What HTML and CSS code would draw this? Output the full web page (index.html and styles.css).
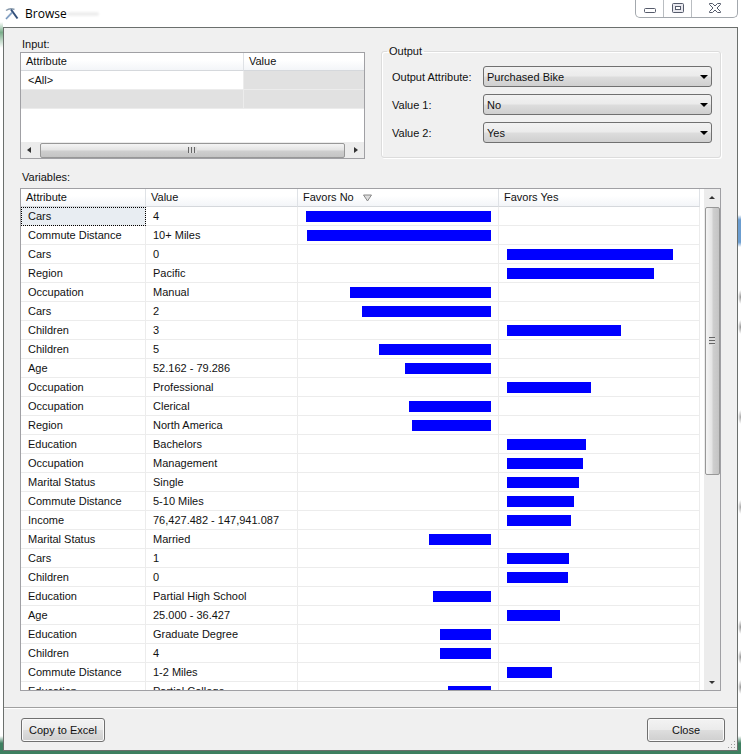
FILE: index.html
```html
<!DOCTYPE html>
<html lang="en">
<head>
<meta charset="utf-8">
<title>Browse</title>
<link rel="stylesheet" href="styles.css">
</head>
<body>
<header class="titlebar">
  <svg class="app-icon" width="14" height="14" viewBox="0 0 14 14" aria-hidden="true">
    <path d="M1 12L8 4.500" stroke="#a9bcd4" stroke-width="2"/>
    <path d="M1 3.5Q5 .5 9.5 2.5" fill="none" stroke="#8a9cae" stroke-width="1.5"/>
    <path d="M6 2.500L12.500 11.500" stroke="#34507a" stroke-width="2"/>
    <path d="M1 12L7 5.5" stroke="#6f93bd" stroke-width="1"/>
  </svg>
  <h1 class="title">Browse</h1>
  <span class="smudge"></span>
  <div class="window-buttons">
    <button class="win-btn" aria-label="Minimize"><svg width="14" height="12" viewBox="0 0 14 12"><rect x="1.5" y="6.500" width="11" height="4" rx="1" fill="#fff" stroke="#555b6b"/></svg></button>
    <button class="win-btn" aria-label="Maximize"><svg width="14" height="12" viewBox="0 0 14 12"><rect x="1.500" y="1.500" width="11" height="9" rx="1" fill="#e8e8ee" stroke="#555b6b"/><rect x="4.500" y="4.500" width="5" height="3" fill="#fff" stroke="#555b6b"/></svg></button>
    <button class="win-btn win-close" aria-label="Close window"><svg width="14" height="12" viewBox="0 0 14 12"><path d="M1.500 1.500H4.500L7 4L9.500 1.500H12.500V2.500L9 6L12.500 9.500V10.500H9.500L7 8L4.500 10.500H1.500V9.500L5 6L1.500 2.500Z" fill="#fff" stroke="#555b6b"/></svg></button>
  </div>
</header>
<main class="client">
  <div class="content">
    <div class="top">
      <section class="input-pane">
        <h2 class="label">Input:</h2>
        <div class="grid-box input-box">
          <table class="grid input-grid">
            <thead><tr><th class="w-name">Attribute</th><th>Value</th></tr></thead>
            <tbody><tr><td>&lt;All&gt;</td><td class="off"></td></tr><tr><td class="off"></td><td class="off"></td></tr></tbody>
          </table>
          <div class="hscroll"><i class="arrow left"></i><div class="thumb"><i class="grip"></i></div><i class="arrow right"></i></div>
        </div>
      </section>
      <fieldset class="output">
        <legend>Output</legend>
        <label for="attr">Output Attribute:</label>
        <div class="combo"><select id="attr"><option>Purchased Bike</option></select></div>
        <label for="v1">Value 1:</label>
        <div class="combo"><select id="v1"><option>No</option><option>Yes</option></select></div>
        <label for="v2">Value 2:</label>
        <div class="combo"><select id="v2"><option>Yes</option><option>No</option></select></div>
      </fieldset>
    </div>
    <h2 class="label vars-label">Variables:</h2>
    <div class="grid-box vars-box">
      <div class="vars-view">
        <table class="grid vars">
          <thead><tr><th class="c1">Attribute</th><th class="c2">Value</th><th class="c3">Favors No <svg class="sort" width="9" height="8" viewBox="0 0 9 8"><path d="M.5 1H8.500L4.500 7Z" fill="#ddd" stroke="#888"/></svg></th><th class="c4">Favors Yes</th></tr></thead>
          <tbody id="rows"></tbody>
        </table>
      </div>
      <div class="vscroll"><i class="arrow up"></i><div class="thumb"><i class="grip"></i></div><i class="arrow down"></i></div>
    </div>
  </div>
  <footer class="footer">
    <button class="btn">Copy to Excel</button>
    <button class="btn close">Close</button>
    <svg class="resize" width="8" height="8" viewBox="0 0 8 8" aria-hidden="true"><path d="M6 0h1v1h-1zM3 3h1v1h-1zM6 3h1v1h-1zM0 6h1v1h-1zM3 6h1v1h-1zM6 6h1v1h-1z" fill="#999"/></svg>
  </footer>
</main>
<div class="backdrop" aria-hidden="true"></div>
<script src="rows.js"></script>
</body>
</html>
```
FILE: styles.css
```css
* { box-sizing: border-box; }
body {
  margin: 0;
  height: 100vh;
  display: flex;
  flex-direction: column;
  position: relative;
  overflow: hidden;
  background: #fff;
  color: #111;
  font: 11px/16px "Liberation Sans", Arial, sans-serif;
}
button, select { font: inherit; color: inherit; }
h1, h2 { margin: 0; font-weight: normal; }
.titlebar {
  flex: none;
  display: flex;
  align-items: center;
  height: 27px;
  padding-left: 5px;
}
.app-icon { flex: none; }
.title { margin-left: 6px; font: 12px/16px "Open Sans", "Noto Sans", sans-serif; color: #000; }
.smudge { width: 32px; height: 4px; border-radius: 2px; background: #eee; filter: blur(1px); }
.window-buttons {
  align-self: flex-start;
  display: flex;
  margin: 0 3px 0 auto;
  height: 18px;
  border: 1px solid #a3a8ad;
  border-top: 0;
  border-radius: 0 0 5px 5px;
}
.win-btn {
  width: 28px;
  padding: 0 0 1px;
  border: 0;
  border-right: 1px solid #b9bdc1;
  background: none;
  display: flex;
  align-items: center;
  justify-content: center;
}
.win-close { width: 45px; border: 0; }
.client {
  flex: 1;
  min-height: 0;
  display: flex;
  flex-direction: column;
  margin: 0 3px 3px;
  border: 1px solid #6b6f6d;
  background: #f0f0f0;
}
.content {
  flex: 1;
  min-height: 0;
  display: flex;
  flex-direction: column;
  padding: 8px 16px 16px;
}
.label { font-size: 11px; line-height: 16px; padding-left: 2px; }
.top { display: grid; grid-template-columns: 345fr 340fr; gap: 16px; }
.grid-box { border: 1px solid #a0a0a4; background: #fff; }
.input-box { display: flex; flex-direction: column; height: 107px; }
.grid { width: 100%; table-layout: fixed; border-collapse: separate; border-spacing: 0; }
.grid th {
  height: 18px;
  padding: 0 5px;
  text-align: left;
  font-weight: normal;
  line-height: 17px;
  border-right: 1px solid #dfe2e6;
  border-bottom: 1px solid #d5d8dc;
  background: linear-gradient(#fff 40%, #f3f5f8);
}
.grid td {
  height: 19px;
  padding: 1px 7px 0;
  line-height: 17px;
  border-right: 1px solid #ececec;
  border-bottom: 1px solid #ececec;
  white-space: nowrap;
}
.grid td.off { background: #e1e1e1; }
.input-grid .w-name { width: 65%; }
.input-grid th:last-child, .input-grid td:last-child { border-right: 0; }
.output {
  display: grid;
  grid-template-columns: 91px 1fr;
  align-items: center;
  row-gap: 7px;
  margin: 7px 0 0;
  min-width: 0;
  padding: 7px 8px 14px 10px;
  border: 1px solid #dcdcdc;
  border-radius: 3px;
  box-shadow: inset 1px 1px #fff, 1px 1px #fff;
  align-self: start;
}
.output legend { margin-left: -5px; padding: 0 2px; }
.combo { position: relative; }
.combo select {
  display: block;
  width: 100%;
  height: 21px;
  padding: 0 3px;
  appearance: none;
  border: 1px solid #707070;
  border-radius: 3px;
  background: linear-gradient(#f2f2f2, #ebebeb 48%, #dddddd 52%, #cfcfcf);
}
.combo::after {
  content: "";
  position: absolute;
  right: 4px;
  top: 9px;
  border: 4px solid transparent;
  border-top-color: #000;
  border-bottom: 0;
  pointer-events: none;
}
.vars-label { margin: 10px 0 3px; }
.vars-box { flex: 1; min-height: 0; display: flex; }
.vars-view { flex: 1; overflow: hidden; padding-right: 4px; }
.c1 { width: 125px; }
.c2 { width: 152px; }
.sort { margin-left: 6px; vertical-align: -1px; }
.vars .focus {
  background: #e8edf2;
  outline: 1px dotted #000;
  outline-offset: -1px;
}
.vars td:last-child { padding-left: 8px; padding-right: 6px; }
.bar { display: block; height: 11px; background: #00f; }
.bar.no { margin-left: auto; }
.thumb { display: flex; align-items: center; justify-content: center; border: 1px solid #979797; border-radius: 2px; }
.arrow { flex: none; border: 3px solid transparent; }
.hscroll { display: flex; align-items: center; height: 16px; margin-top: auto; padding: 0 6px; background: #ececec; }
.hscroll .thumb { flex: 1; height: 15px; margin: 0 9px; background: linear-gradient(#f4f4f4, #e3e3e3 48%, #cfcfcf 52%, #c4c4c4); }
.hscroll .grip { width: 9px; height: 6px; background: repeating-linear-gradient(90deg, #666 0 1px, #ddd 1px 3px); }
.left { border-right: 4px solid #333; border-left: 0; }
.right { border-left: 4px solid #333; border-right: 0; }
.vscroll { display: flex; flex-direction: column; align-items: center; width: 16px; padding: 7px 0 6px; background: #ececec; }
.vscroll .thumb { width: 15px; height: 55%; margin-top: 8px; background: linear-gradient(90deg, #f4f4f4, #e3e3e3 48%, #cfcfcf 52%, #c4c4c4); }
.vscroll .grip { width: 6px; height: 8px; background: repeating-linear-gradient(#666 0 1px, #ddd 1px 3px); }
.up { border-bottom: 3px solid #333; border-top: 0; }
.down { border-top: 3px solid #333; border-bottom: 0; margin-top: auto; }
.footer {
  position: relative;
  display: flex;
  justify-content: space-between;
  padding: 10px 12px 8px 17px;
  border-top: 1px solid #a0a0a0;
  box-shadow: inset 0 1px #fff;
}
.btn {
  height: 24px;
  padding: 0 6px;
  min-width: 84px;
  border: 1px solid #707070;
  border-radius: 3px;
  background: linear-gradient(#f3f3f3, #ebebeb 48%, #dddddd 52%, #cfcfcf);
  box-shadow: inset 0 0 0 1px #fafafa;
}
.btn.close { min-width: 78px; }
.resize { position: absolute; right: 1px; bottom: 1px; }
.backdrop {
  position: absolute;
  inset: 0;
  z-index: -1;
  background:
    linear-gradient(transparent, #6b9dd0 15% 85%, transparent) right top 215px / 3px 32px no-repeat,
    radial-gradient(#999, transparent 70%) right -2px top 290px / 5px 14px no-repeat,
    radial-gradient(#999, transparent 70%) right -2px top 320px / 5px 14px no-repeat,
    radial-gradient(#aaa, transparent 70%) right -2px top 410px / 5px 14px no-repeat,
    radial-gradient(#aaa, transparent 70%) right -2px top 500px / 5px 14px no-repeat,
    radial-gradient(#999, transparent 70%) right -2px top 620px / 5px 14px no-repeat,
    radial-gradient(#999, transparent 70%) right -2px top 650px / 5px 14px no-repeat,
    radial-gradient(#999, transparent 70%) right -2px top 680px / 5px 14px no-repeat,
    linear-gradient(#fff, #79ad8a 40%, #fff) left top 22px / 3px 26px no-repeat,
    linear-gradient(transparent, #3e7f60 40%) left bottom / 100% 18px no-repeat;
}
```
FILE: rows.js
```js
// Each entry: attribute, value, favoured side, bar length as a share of 186.
const data = [
  ["Cars", "4", "no", 185],
  ["Commute Distance", "10+ Miles", "no", 184],
  ["Cars", "0", "yes", 166],
  ["Region", "Pacific", "yes", 147],
  ["Occupation", "Manual", "no", 141],
  ["Cars", "2", "no", 129],
  ["Children", "3", "yes", 114],
  ["Children", "5", "no", 112],
  ["Age", "52.162 - 79.286", "no", 86],
  ["Occupation", "Professional", "yes", 84],
  ["Occupation", "Clerical", "no", 82],
  ["Region", "North America", "no", 79],
  ["Education", "Bachelors", "yes", 79],
  ["Occupation", "Management", "yes", 76],
  ["Marital Status", "Single", "yes", 72],
  ["Commute Distance", "5-10 Miles", "yes", 67],
  ["Income", "76,427.482 - 147,941.087", "yes", 64],
  ["Marital Status", "Married", "no", 62],
  ["Cars", "1", "yes", 62],
  ["Children", "0", "yes", 61],
  ["Education", "Partial High School", "no", 58],
  ["Age", "25.000 - 36.427", "yes", 53],
  ["Education", "Graduate Degree", "no", 51],
  ["Children", "4", "no", 51],
  ["Commute Distance", "1-2 Miles", "yes", 45],
  ["Education", "Partial College", "no", 43]
];
document.getElementById("rows").innerHTML = data.map(([name, value, side, size], i) => {
  const bar = `<span class="bar ${side}" style="width:${(size / 186 * 100).toFixed(2)}%"></span>`;
  return `<tr><td${i === 0 ? ' class="focus"' : ""}>${name}</td><td>${value}</td>` +
    `<td>${side === "no" ? bar : ""}</td><td>${side === "yes" ? bar : ""}</td></tr>`;
}).join("");
```
